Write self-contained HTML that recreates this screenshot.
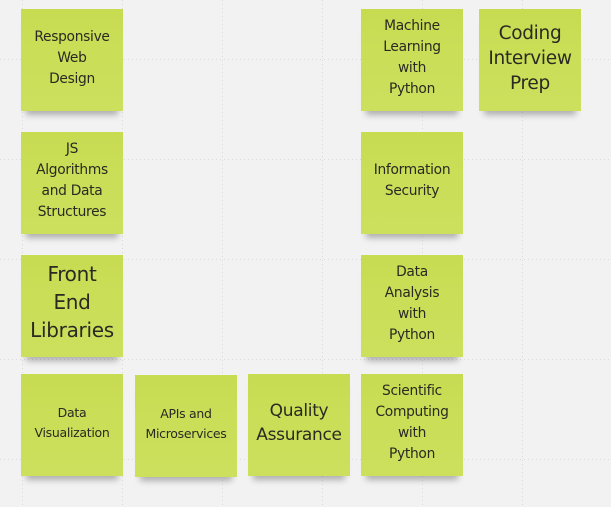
<!DOCTYPE html>
<html><head><style>
html,body{margin:0;padding:0}
body{width:611px;height:507px;overflow:hidden;position:relative;background:#f2f2f2;
font-family:"DejaVu Sans","Liberation Sans",sans-serif;}
.v{position:absolute;top:0;bottom:0;width:1px;background:repeating-linear-gradient(to bottom,#dadada 0 1px,transparent 1px 4px)}
.h{position:absolute;left:0;right:0;height:1px;background:repeating-linear-gradient(to right,#dadada 0 1px,transparent 1px 4px)}
.n{position:absolute;width:102px;height:98px;padding-bottom:4px;background:linear-gradient(to bottom,#c8dc52,#cde05e);
display:flex;align-items:center;justify-content:center;text-align:center;color:#2a2a22;
box-shadow:0 9px 6px -5px rgba(0,0,0,0.28);letter-spacing:-0.3px}
.s{font-size:13.8px;line-height:21px}.t{font-size:12.5px;line-height:20px}.b{font-size:18.5px;line-height:25px}
</style></head><body>
<div class="v" style="left:22px"></div><div class="v" style="left:122px"></div><div class="v" style="left:222px"></div><div class="v" style="left:322px"></div><div class="v" style="left:422px"></div><div class="v" style="left:522px"></div>
<div class="h" style="top:59px"></div><div class="h" style="top:159px"></div><div class="h" style="top:259px"></div><div class="h" style="top:359px"></div><div class="h" style="top:459px"></div>

<div class="n s" style="left:21px;top:9px">Responsive<br>Web<br>Design</div>
<div class="n s" style="left:21px;top:132px">JS<br>Algorithms<br>and Data<br>Structures</div>
<div class="n b" style="left:21px;top:255px;font-size:20px;line-height:28px;height:94px;padding-bottom:8px">Front<br>End<br>Libraries</div>
<div class="n t" style="left:21px;top:374px">Data<br>Visualization</div>
<div class="n t" style="left:135px;top:375px">APIs and<br>Microservices</div>
<div class="n b" style="left:248px;top:374px;font-size:17px;line-height:24px">Quality<br>Assurance</div>
<div class="n s" style="left:361px;top:374px">Scientific<br>Computing<br>with<br>Python</div>
<div class="n s" style="left:361px;top:255px">Data<br>Analysis<br>with<br>Python</div>
<div class="n s" style="left:361px;top:132px">Information<br>Security</div>
<div class="n s" style="left:361px;top:9px">Machine<br>Learning<br>with<br>Python</div>
<div class="n b" style="left:479px;top:9px">Coding<br>Interview<br>Prep</div>
</body></html>
